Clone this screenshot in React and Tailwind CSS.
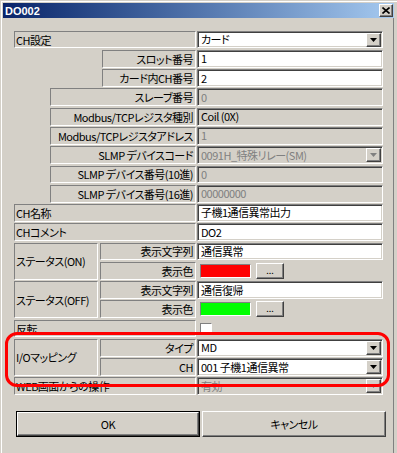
import React from 'react';

const sunken = 'border border-t-[#808080] border-l-[#808080] border-b-white border-r-white';
const fieldBox =
  'mb-[1.5px] flex items-center overflow-hidden whitespace-nowrap border border-t-[#808080] border-l-[#808080] border-b-white border-r-white shadow-[inset_1px_1px_#404040,inset_-1px_-1px_#d4d0c8]';
const raised =
  'border border-t-white border-l-white border-b-[#404040] border-r-[#404040] shadow-[inset_-1px_-1px_#808080] bg-[#d4d0c8]';

function Label({ className = '', right, children }) {
  return (
    <div
      className={`mb-[1.5px] flex items-center whitespace-nowrap ${sunken} ${
        right ? 'justify-end pr-[2px]' : 'pl-px'
      } ${className}`}
    >
      {children}
    </div>
  );
}

function Arrow({ disabled }) {
  return (
    <div className={`ml-auto mr-px flex h-[14px] w-[15px] shrink-0 items-center justify-center ${raised}`}>
      <svg width="7" height="4" viewBox="0 0 7 4">
        <path d="M0 0h7L3.5 4z" fill={disabled ? '#808080' : '#000'} />
      </svg>
    </div>
  );
}

function Field({ className = '', value, disabled, readOnly, select }) {
  const bg = disabled || readOnly ? 'bg-[#d4d0c8]' : 'bg-white';
  const color = disabled ? 'text-[#808080]' : 'text-black';
  return (
    <div className={`col-start-4 ${fieldBox} ${bg} ${color} pl-[3px] ${className}`}>
      <span className="min-w-0 flex-1 whitespace-nowrap leading-[15px]">{value}</span>
      {select && <Arrow disabled={disabled} />}
    </div>
  );
}

function ColorPick({ className = '', color }) {
  return (
    <div className={`col-start-4 mb-[1.5px] flex items-center gap-[5px] pl-[3px] ${className}`}>
      <div className={`h-[14px] w-[51px] ${sunken} ${color}`} />
      <div className={`flex h-[16px] w-[28px] items-end justify-center pb-[3px] text-[9px] leading-none tracking-normal ${raised}`}>
        ...
      </div>
    </div>
  );
}

export default function App() {
  return (
    <div className="relative h-[453px] w-[397px] overflow-hidden bg-[#d4d0c8] font-['Noto_Sans_CJK_JP',sans-serif] text-[11px] leading-[14px] tracking-[-0.5px] text-black shadow-[inset_1px_1px_#d4d0c8,inset_2px_2px_#fff] [font-feature-settings:'palt']">
      <div className="pl-[3px] pt-[3px]">
        <div className="w-[391px]">
          {/* Title bar */}
          <div className="flex h-[15px] items-center justify-between bg-linear-to-r from-[#0a246a] to-[#a6caf0] pl-[2px] pr-px">
            <span className="font-['Liberation_Sans',sans-serif] text-[11px] font-bold leading-[14px] tracking-normal text-white">DO002</span>
            <div className={`flex h-[13px] w-[14px] items-center justify-center ${raised}`}>
              <svg width="8" height="7" viewBox="0 0 8 7">
                <path d="M0.5 0.5L7.5 6.5M7.5 0.5L0.5 6.5" stroke="#000" strokeWidth="1.6" />
              </svg>
            </div>
          </div>

          {/* Body */}
          <div className="h-[435px] border-r border-[#808080] pl-[11px] pt-[12.7px]">
            <div className="grid grid-cols-[36px_50px_97px_186px] grid-rows-[repeat(19,19.28px)]">
              <Label className="col-span-3 col-start-1 row-start-1 mr-px">CH設定</Label>
              <Field className="row-start-1" value="カード" select />

              <Label right className="col-start-3 row-start-2 ml-[2px] mr-px">スロット番号</Label>
              <Field className="row-start-2" value="1" />
              <Label right className="col-start-3 row-start-3 ml-[2px] mr-px">カード内CH番号</Label>
              <Field className="row-start-3" value="2" />

              <Label right className="col-span-2 col-start-2 row-start-4 mr-px">スレーブ番号</Label>
              <Field className="row-start-4" value="0" disabled />
              <Label right className="col-span-2 col-start-2 row-start-5 mr-px">Modbus/TCPレジスタ種別</Label>
              <Field className="row-start-5" value="Coil (0X)" readOnly />
              <Label right className="col-span-2 col-start-2 row-start-6 mr-px">Modbus/TCPレジスタアドレス</Label>
              <Field className="row-start-6" value="1" disabled />
              <Label right className="col-span-2 col-start-2 row-start-7 mr-px">SLMP デバイスコード</Label>
              <Field className="row-start-7" value="0091H_特殊リレー(SM)" disabled select />
              <Label right className="col-span-2 col-start-2 row-start-8 mr-px">SLMP デバイス番号(10進)</Label>
              <Field className="row-start-8" value="0" disabled />
              <Label right className="col-span-2 col-start-2 row-start-9 mr-px">SLMP デバイス番号(16進)</Label>
              <Field className="row-start-9" value="00000000" disabled />

              <Label className="col-span-3 col-start-1 row-start-10 mr-px">CH名称</Label>
              <Field className="row-start-10" value="子機1通信異常出力" />
              <Label className="col-span-3 col-start-1 row-start-11 mr-px">CHコメント</Label>
              <Field className="row-start-11" value="DO2" />

              <Label className="col-span-2 col-start-1 row-span-2 row-start-12 mr-[2px]">ステータス(ON)</Label>
              <Label right className="col-start-3 row-start-12 mr-px">表示文字列</Label>
              <Field className="row-start-12" value="通信異常" />
              <Label right className="col-start-3 row-start-13 mr-px">表示色</Label>
              <ColorPick className="row-start-13" color="bg-[#ff0000]" />

              <Label className="col-span-2 col-start-1 row-span-2 row-start-14 mr-[2px]">ステータス(OFF)</Label>
              <Label right className="col-start-3 row-start-14 mr-px">表示文字列</Label>
              <Field className="row-start-14" value="通信復帰" />
              <Label right className="col-start-3 row-start-15 mr-px">表示色</Label>
              <ColorPick className="row-start-15" color="bg-[#00ff00]" />

              <Label className="col-span-3 col-start-1 row-start-16 mr-px">反転</Label>
              <div className="col-start-4 row-start-16 pl-[3px] pt-[3px]">
                <div className={`h-[12px] w-[12px] bg-white ${sunken}`} />
              </div>

              <Label className="col-span-2 col-start-1 row-span-2 row-start-17 mr-[2px]">I/Oマッピング</Label>
              <Label right className="col-start-3 row-start-17 mr-px">タイプ</Label>
              <Field className="row-start-17" value="MD" select />
              <Label right className="col-start-3 row-start-18 mr-px">CH</Label>
              <Field className="row-start-18" value="001 子機1通信異常" select />

              <Label className="col-span-3 col-start-1 row-start-19 mr-px">WEB画面からの操作</Label>
              <Field className="row-start-19" value="有効" disabled select />
            </div>

            {/* Buttons */}
            <div className="mt-[14.5px] flex gap-[2px] pl-[2px]">
              <div className="flex h-[26px] w-[184px] items-center justify-center border border-black">
                <div className={`flex h-full w-full items-center justify-center ${raised}`}>OK</div>
              </div>
              <div className={`flex h-[26px] w-[184px] items-center justify-center ${raised}`}>キャンセル</div>
            </div>
          </div>
        </div>
      </div>

      {/* Annotation */}
      <div className="pointer-events-none absolute left-[5px] top-[332px] h-[55px] w-[385px] rounded-[12px] border-[3px] border-[#ff0000]" />
    </div>
  );
}
